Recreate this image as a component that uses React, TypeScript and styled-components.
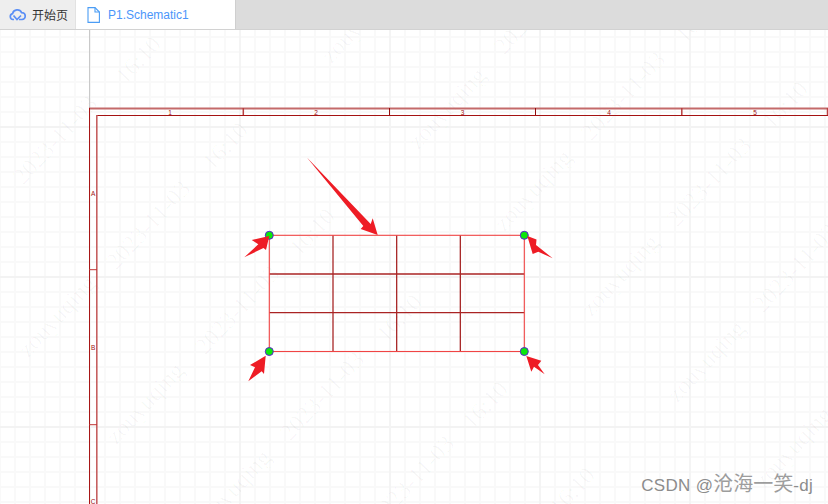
import React from "react";
import styled, { createGlobalStyle } from "styled-components";

const GlobalStyle = createGlobalStyle`
  html, body {
    margin: 0;
    padding: 0;
    background: #fff;
  }
`;

const Page = styled.div`
  width: 828px;
  height: 504px;
  display: flex;
  flex-direction: column;
  overflow: hidden;
  font-family: "Liberation Sans", "Noto Sans CJK SC", sans-serif;
`;

const TabBar = styled.div`
  height: 29px;
  flex: none;
  display: flex;
  background: #dcdcdc;
  border-bottom: 1px solid #d2d2d2;
`;

const Tab = styled.div<{ $active?: boolean }>`
  display: flex;
  align-items: center;
  box-sizing: border-box;
  width: ${(p) => (p.$active ? "160px" : "76px")};
  padding-left: ${(p) => (p.$active ? "11px" : "9px")};
  gap: ${(p) => (p.$active ? "8px" : "6px")};
  font-size: 12px;
  color: ${(p) => (p.$active ? "#4b96fa" : "#333")};
  background: ${(p) => (p.$active ? "#fff" : "#eeeeee")};
  border-right: 1px solid ${(p) => (p.$active ? "#cfcfcf" : "#e2e2e2")};
`;

const Canvas = styled.div`
  position: relative;
  flex: 1;
  background-color: #fff;
  background-image: linear-gradient(to right, #f4f4f4 2px, transparent 2px),
    linear-gradient(to bottom, #f3f3f3 2px, transparent 2px),
    linear-gradient(to right, #f9f9f9 2px, transparent 2px),
    linear-gradient(to bottom, #f9f9f9 2px, transparent 2px);
  background-size: 150px 150px, 150px 150px, 15px 15px, 15px 15px;
  background-position: 89px 0, 0 96px, -1px 0, 0 6px;
`;

const Drawing = styled.svg`
  display: block;
  width: 828px;
  height: 474px;
`;

const Mark = styled.text`
  font-family: "Liberation Serif", serif;
  font-size: 24px;
  fill: rgba(0, 0, 0, 0.03);
  text-anchor: middle;
`;

const SheetLabel = styled.text`
  font-family: "Liberation Sans", sans-serif;
  font-size: 6.5px;
  fill: #a01010;
  text-anchor: middle;
`;

const Credit = styled.div`
  position: absolute;
  right: 15px;
  bottom: 6px;
  display: flex;
  align-items: baseline;
  font-size: 17px;
  line-height: 24px;
  letter-spacing: 0.3px;
  color: #8c8c8c;
  text-shadow: 0 0 1px rgba(255, 255, 255, 0.8);
  white-space: pre;
`;

const CreditCjk = styled.span`
  font-size: 20px;
  letter-spacing: 0;
  opacity: 0.85;
`;

const CloudIcon = () => (
  <svg width="17" height="14" viewBox="0 0 17 14" fill="none" stroke="#5b8ff5" strokeWidth="1.7">
    <path d="M5 11.5H4A3 3 0 0 1 3.6 5.6 4.8 4.8 0 0 1 12.6 4.6 3.4 3.4 0 0 1 13 11.5H10" />
    <path d="M4.5 7.5 8 11.5 12 7.5" />
  </svg>
);

const FileIcon = () => (
  <svg width="13" height="16" viewBox="0 0 13 16" fill="none" stroke="#4b9df5" strokeWidth="1.1">
    <path d="M1 .6H8L12.4 5V15.4H1Z" />
    <path d="M8 .6V5H12.4" />
  </svg>
);

const dateMarks = [
  [55, 140], [148, 225], [237, 310], [322, 396], [412, 480],
  [536, 10], [623, 96], [709, 182], [795, 268],
];
const timeMarks = [
  [138, 60], [225, 146], [312, 232], [399, 318], [485, 405], [572, 491],
  [698, 19], [785, 105],
];
const nameMarks = [
  [57, 316], [145, 403], [232, 490],
  [360, 22], [447, 108], [533, 190], [620, 275], [706, 361], [793, 447],
];

const columnTicks = [
  { x: 243.3, strong: false },
  { x: 389.5, strong: true },
  { x: 535.5, strong: true },
  { x: 681.8, strong: false },
  { x: 827.5, strong: false },
];

const arrows = [
  "306.7,157.3 370.7,224 372.7,218.3 377.7,235 360.7,229 363.3,226",
  "244.3,257.3 258.3,244.3 251.7,240 269.3,236 266,250 263.5,248",
  "527.3,236 536.5,239.5 536,245 552.7,258.3 538.3,251.7 532.7,254",
  "265.7,355.7 250,365 255,367.3 248.3,381.3 261.7,371.3 264,374",
  "526.3,356 541.3,360.7 538,365 544.7,374.3 534,366.7 531.3,371.7",
];

const corners = [
  [269.3, 235.3],
  [524.3, 235.3],
  [269.3, 351.5],
  [524.3, 351.5],
];

const Schematic = () => (
  <Drawing viewBox="0 30 828 474">
    {dateMarks.map(([x, y]) => (
      <Mark key={`d${x}`} x={x} y={y + 8} transform={`rotate(-47 ${x} ${y})`}>
        2023-11-03
      </Mark>
    ))}
    {timeMarks.map(([x, y]) => (
      <Mark key={`t${x}`} x={x} y={y + 8} transform={`rotate(-47 ${x} ${y})`}>
        16:10
      </Mark>
    ))}
    {nameMarks.map(([x, y]) => (
      <Mark key={`n${x}`} x={x} y={y + 8} transform={`rotate(-47 ${x} ${y})`}>
        zouyuqing
      </Mark>
    ))}

    {/* sheet frame */}
    <line x1="89.5" y1="30" x2="89.5" y2="108" stroke="#c9c9c9" />
    <line x1="89" y1="108.5" x2="828" y2="108.5" stroke="#c46a6a" strokeWidth="1.8" />
    <line x1="96" y1="115.5" x2="828" y2="115.5" stroke="#a51212" />
    <line x1="89.5" y1="108" x2="89.5" y2="504" stroke="#a81616" />
    <line x1="96.8" y1="115" x2="96.8" y2="504" stroke="#c66060" strokeWidth="1.6" />
    {columnTicks.map(({ x, strong }) => (
      <line
        key={x}
        x1={x}
        y1="108"
        x2={x}
        y2="115"
        stroke={strong ? "#920c0c" : "#b84040"}
        strokeWidth={strong ? 1 : 1.5}
      />
    ))}
    {[269.7, 424.7].map((y) => (
      <line key={y} x1="89" y1={y} x2="97" y2={y} stroke="#c03434" />
    ))}
    {[170, 316, 462.5, 609, 755].map((x, i) => (
      <SheetLabel key={x} x={x} y="114.5">
        {i + 1}
      </SheetLabel>
    ))}
    {[
      ["A", 196],
      ["B", 349.5],
      ["C", 503.5],
    ].map(([label, y]) => (
      <SheetLabel key={label} x="93.2" y={y}>
        {label}
      </SheetLabel>
    ))}

    {/* table outline */}
    {[333, 396.7, 460.3].map((x) => (
      <line key={x} x1={x} y1="235.3" x2={x} y2="351.5" stroke="#a01414" strokeWidth="1.2" />
    ))}
    {[274, 312.7].map((y) => (
      <line key={y} x1="269.3" y1={y} x2="524.3" y2={y} stroke="#aa2424" strokeWidth="1.3" />
    ))}
    <rect x="269.3" y="235.3" width="255" height="116.2" fill="none" stroke="#f04444" strokeWidth="1.1" />
    {corners.map(([x, y]) => (
      <circle key={`${x}-${y}`} cx={x} cy={y} r="4" fill="#0be80b" stroke="#5a1ed2" strokeWidth="1" />
    ))}

    {arrows.map((points) => (
      <polygon key={points} points={points} fill="#ee1c25" />
    ))}
  </Drawing>
);

const App = () => (
  <>
    <GlobalStyle />
    <Page>
      <TabBar>
        <Tab>
          <CloudIcon />
          开始页
        </Tab>
        <Tab $active>
          <FileIcon />
          P1.Schematic1
        </Tab>
      </TabBar>
      <Canvas>
        <Schematic />
        <Credit>
          CSDN @<CreditCjk>沧海一笑</CreditCjk>-dj
        </Credit>
      </Canvas>
    </Page>
  </>
);

export default App;
